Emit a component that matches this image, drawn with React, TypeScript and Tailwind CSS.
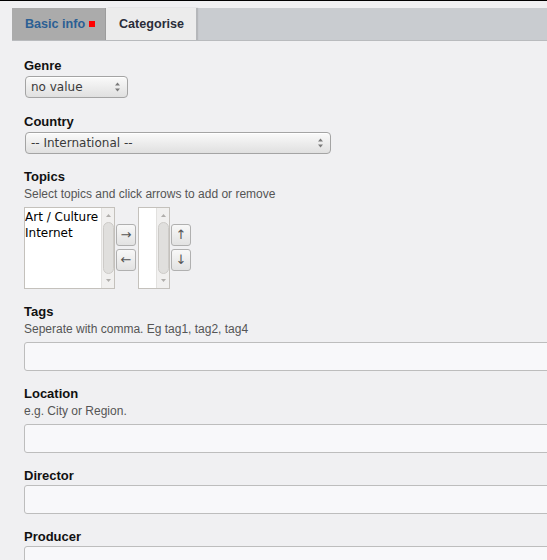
import React from "react";

const SelectArrows = () => (
  <svg width="7" height="11" viewBox="0 0 7 11" className="absolute right-[6px] top-1/2 -translate-y-1/2">
    <path d="M3.5 1 L6 4 L1 4 Z" fill="#7a7a7a" />
    <path d="M3.5 10 L6 7 L1 7 Z" fill="#7a7a7a" />
  </svg>
);

const Select = ({ text, w }: { text: string; w: string }) => (
  <div
    className={`relative flex h-[22px] ${w} items-center rounded-[4px] border border-[#a4a4a4] bg-linear-to-b from-[#fafafa] to-[#e0e0e0] pl-[5px] text-[12px] text-[#3a3a3a] shadow-[inset_0_1px_0_#ffffff]`}
    style={{ fontFamily: '"DejaVu Sans", sans-serif' }}
  >
    {text}
    <SelectArrows />
  </div>
);

const Scrollbar = () => (
  <div className="flex h-full w-[13px] flex-col items-center border-l border-[#e2e1df] bg-[#f1f0ef]">
    <svg width="7" height="10" viewBox="0 0 7 10" className="mt-[3px]">
      <path d="M3.5 3 L6 6 L1 6 Z" fill="#b0aeab" />
    </svg>
    <div className="mt-[1px] w-[11px] flex-1 rounded-full border border-[#cdcbc8] bg-[#e0dfdd]" />
    <svg width="7" height="10" viewBox="0 0 7 10" className="mb-[3px] mt-[1px]">
      <path d="M3.5 7 L6 4 L1 4 Z" fill="#b0aeab" />
    </svg>
  </div>
);

const ArrowBtn = ({ glyph }: { glyph: string }) => (
  <div
    className="flex h-[22px] w-[20px] items-center justify-center rounded-[3px] border border-[#b0b0b0] bg-linear-to-b from-[#f8f8f8] to-[#e2e2e2] text-[13px] text-[#555]"
    style={{ fontFamily: '"DejaVu Sans", sans-serif' }}
  >
    {glyph}
  </div>
);

const Label = ({ children, className = "" }: { children: React.ReactNode; className?: string }) => (
  <div className={`text-[13px] font-bold leading-[16px] text-[#111] ${className}`}>{children}</div>
);

const Help = ({ children, className = "" }: { children: React.ReactNode; className?: string }) => (
  <div className={`text-[12px] leading-[16px] text-[#555] ${className}`}>{children}</div>
);

const Input = ({ className = "" }: { className?: string }) => (
  <div className={`h-[29px] w-[620px] shrink-0 rounded-[3px] border border-[#bdbdbd] bg-[#f8f8fa] ${className}`} />
);

export default function App() {
  return (
    <div
      className="h-[560px] w-[547px] overflow-hidden border-t border-black bg-[#f0f0f2]"
      style={{ fontFamily: '"Liberation Sans", Arial, sans-serif' }}
    >
      <div className="ml-[12px] mt-[7px] flex h-[33px] border-b border-[#b9bbbe] bg-[#c9ccd0]">
        <div className="flex h-full w-[94px] items-center whitespace-nowrap border-r border-[#9c9c9c] bg-[#ababab] pl-[13px] text-[12.6px] font-bold text-[#2b5f94]">
          Basic info
          <span className="ml-[4px] inline-block h-[6px] w-[6px] bg-[#ff0000]" />
        </div>
        <div className="flex h-full w-[90px] items-center whitespace-nowrap bg-[#ececec] pl-[13px] text-[12.6px] font-bold text-[#2a2d3a] shadow-[2px_0_1px_#b5b7ba]">
          Categorise
        </div>
      </div>

      <div className="flex flex-col items-start pl-[24px]">
        <Label className="mt-[17px]">Genre</Label>
        <div className="ml-[1px] mt-[2px]">
          <Select text="no value" w="w-[103px]" />
        </div>

        <Label className="mt-[16px]">Country</Label>
        <div className="ml-[1px] mt-[2px]">
          <Select text="-- International --" w="w-[306px]" />
        </div>

        <Label className="mt-[15px]">Topics</Label>
        <Help className="mt-[1px]">Select topics and click arrows to add or remove</Help>

        <div className="mt-[5px] flex h-[82px] items-start">
          <div className="flex h-full w-[91px] border border-[#c4c1bc] bg-white">
            <div
              className="flex-1 overflow-hidden whitespace-nowrap pt-[1px] text-[12px] leading-[16px] text-black"
              style={{ fontFamily: '"DejaVu Sans", sans-serif' }}
            >
              <div>Art / Culture</div>
              <div>Internet</div>
            </div>
            <Scrollbar />
          </div>
          <div className="ml-[1px] mt-[17px] flex flex-col gap-[3px]">
            <ArrowBtn glyph="→" />
            <ArrowBtn glyph="←" />
          </div>
          <div className="ml-[2px] flex h-full w-[32px] border border-[#c4c1bc] bg-white">
            <div className="flex-1" />
            <Scrollbar />
          </div>
          <div className="ml-[1px] mt-[17px] flex flex-col gap-[3px]">
            <ArrowBtn glyph="↑" />
            <ArrowBtn glyph="↓" />
          </div>
        </div>

        <Label className="mt-[15px]">Tags</Label>
        <Help className="mt-[1px]">Seperate with comma. Eg tag1, tag2, tag4</Help>
        <Input className="mt-[5px]" />

        <Label className="mt-[15px]">Location</Label>
        <Help className="mt-[1px]">e.g. City or Region.</Help>
        <Input className="mt-[5px]" />

        <Label className="mt-[15px]">Director</Label>
        <Input className="mt-[1px]" />

        <Label className="mt-[15px]">Producer</Label>
        <Input className="mt-[1px]" />
      </div>
    </div>
  );
}
